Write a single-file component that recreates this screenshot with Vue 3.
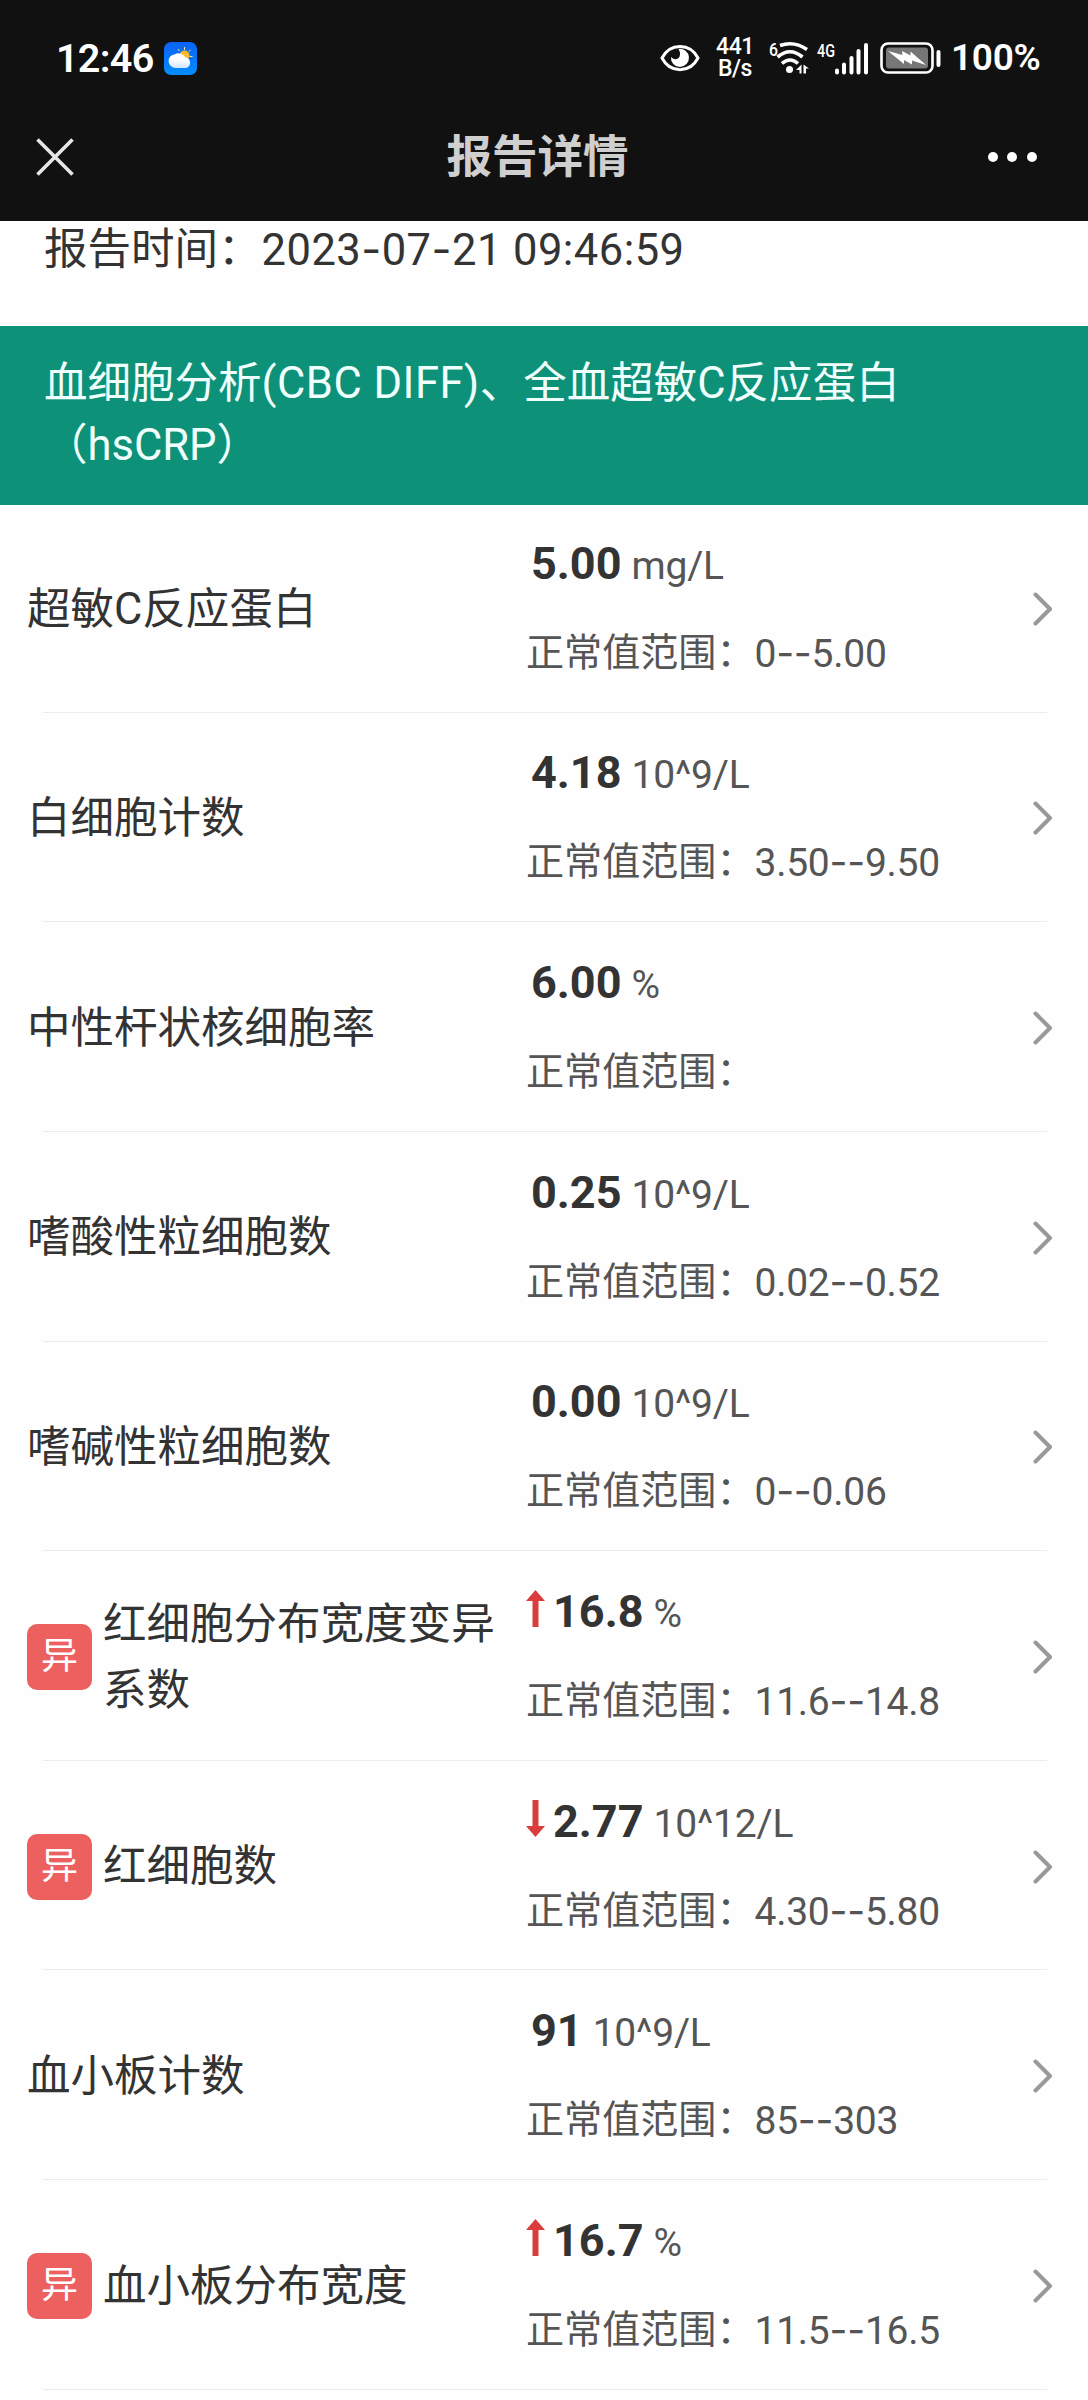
<script setup>
const reportTime = '2023-07-21 09:46:59'

const items = [
  { name: '超敏C反应蛋白', value: '5.00', unit: 'mg/L', range: '0--5.00' },
  { name: '白细胞计数', value: '4.18', unit: '10^9/L', range: '3.50--9.50' },
  { name: '中性杆状核细胞率', value: '6.00', unit: '%', range: '' },
  { name: '嗜酸性粒细胞数', value: '0.25', unit: '10^9/L', range: '0.02--0.52' },
  { name: '嗜碱性粒细胞数', value: '0.00', unit: '10^9/L', range: '0--0.06' },
  { name: '红细胞分布宽度变异系数', value: '16.8', unit: '%', range: '11.6--14.8', flag: 'up' },
  { name: '红细胞数', value: '2.77', unit: '10^12/L', range: '4.30--5.80', flag: 'down' },
  { name: '血小板计数', value: '91', unit: '10^9/L', range: '85--303' },
  { name: '血小板分布宽度', value: '16.7', unit: '%', range: '11.5--16.5', flag: 'up' },
]

// keep the dashes as separate pieces, they use a wider glyph
const pieces = (text) => text.split(/(-+)/).filter(Boolean)
const isDash = (text) => text[0] === '-'
</script>

<template>
  <div class="page">
    <header class="top">
      <div class="status">
        <span class="clock">12:46</span>
        <svg class="weather" viewBox="0 0 33 33">
          <defs>
            <linearGradient id="sky" x1="0" y1="0" x2="0" y2="1">
              <stop offset="0" stop-color="#0a62f4" />
              <stop offset="1" stop-color="#058dff" />
            </linearGradient>
            <linearGradient id="cloud" x1="0" y1="0" x2="0" y2="1">
              <stop offset=".4" stop-color="#fff" />
              <stop offset="1" stop-color="#cfe6ff" />
            </linearGradient>
          </defs>
          <rect width="33" height="33" rx="7" fill="url(#sky)" />
          <path d="M20.500 5v3M14 7l1.600 2M26.500 8l-2 1.700M25.500 14.500h3" stroke="#ffe08a" stroke-width="1" />
          <circle cx="20.500" cy="13.500" r="5" fill="#fdbb25" />
          <path d="M12 26a6.500 6.500 0 0 1-1-13.800 8 8 0 0 1 10.500 3.300A5.300 5.300 0 0 1 21.500 26z" fill="url(#cloud)" />
        </svg>
        <div class="status-right">
          <svg class="eye" viewBox="0 0 40 28">
            <path d="M2 14C10-1.500 30-1.500 38 14 30 29.500 10 29.500 2 14z" fill="none" stroke="#fff" stroke-width="3" />
            <path d="M18.500 5A9 9 0 1 1 11 13q3.500 3.500 7 1.500 4-3.500.5-9.500z" fill="#fff" />
          </svg>
          <div class="speed"><span>441</span><span>B/s</span></div>
          <svg class="wifi" viewBox="0 0 42 36">
            <text x="0" y="16" font-size="19" font-weight="500" textLength="9" lengthAdjust="spacingAndGlyphs">6</text>
            <g fill="none" stroke="#fff" stroke-width="3.600">
              <path d="M11 5.500Q25 .5 38 9.500" />
              <path d="M8.500 17Q21 6.500 33.500 17" />
              <path d="M13 23.500q8-7 16 0" />
            </g>
            <circle cx="20.500" cy="29.500" r="3.500" fill="#fff" />
            <path d="M27 30l5.500-5.500v9h-2v-3.500zM34.500 24.500l5.500 4h-3v5h-2.500z" fill="#fff" />
          </svg>
          <svg class="signal" viewBox="0 0 54 36">
            <text x="0" y="17" font-size="19" font-weight="500" textLength="18" lengthAdjust="spacingAndGlyphs">4G</text>
            <path d="M20 30.500v2M27 24.500v8M34.500 18v14.500M41.500 11v21.500M49 5v27.500" stroke="#fff" stroke-width="4" stroke-linecap="round" />
          </svg>
          <svg class="battery" viewBox="0 0 62 32">
            <rect x="1.500" y="1.500" width="51" height="29" rx="6.500" fill="none" stroke="#fff" stroke-width="2.600" />
            <rect x="6" y="5.500" width="42" height="21" rx="3" fill="#777" />
            <path d="M8 9l14.500 4-.5-4 8.500 4.500V9.500L46 23l-14-4.500v4l-8-4.500v4z" fill="#fff" />
            <path d="M58.500 10v13" stroke="#fff" stroke-width="4" stroke-linecap="round" />
          </svg>
          <span class="percent">100%</span>
        </div>
      </div>
      <nav class="navbar">
        <svg class="close" viewBox="0 0 38 38">
          <path d="M1.500 1.500l35 35M36.500 1.500l-35 35" stroke="#e6e6e6" stroke-width="3.600" />
        </svg>
        <h1>报告详情</h1>
        <div class="more"><i></i><i></i><i></i></div>
      </nav>
    </header>

    <div class="report-time">
      <span>报告时间：</span>
      <span class="date"><span v-for="(p, i) in pieces(reportTime)" :key="i" :class="{ dash: isDash(p) }">{{ p }}</span></span>
    </div>

    <div class="banner">血细胞分析<span class="latin">(CBC DIFF)</span>、全血超敏C反应蛋白<br />（hsCRP）</div>

    <ul class="list">
      <li v-for="item in items" :key="item.name" class="item">
        <span v-if="item.flag" class="badge">异</span>
        <div class="name">{{ item.name }}</div>
        <div class="result">
          <div class="line">
            <svg v-if="item.flag" class="arrow" :class="item.flag" viewBox="0 0 19 37">
              <path d="M9.500 0L19 11h-6.500v26h-6V11H0z" fill="#d93d3d" />
            </svg>
            <span class="value">{{ item.value }}</span>
            <span class="unit">{{ item.unit }}</span>
          </div>
          <div class="range">
            <span>正常值范围：</span>
            <span class="limits"><span v-for="(p, i) in pieces(item.range)" :key="i" :class="{ dash: isDash(p) }">{{ p }}</span></span>
          </div>
        </div>
        <svg class="chevron" viewBox="0 0 20 34">
          <path d="M2.500 2.500L17 17 2.500 31.500" fill="none" stroke="#999" stroke-width="4" stroke-linecap="round" stroke-linejoin="round" />
        </svg>
      </li>
    </ul>
  </div>
</template>

<style>
body{margin:0;background:#fefefe}
</style>

<style scoped>
.page{width:1088px;height:2400px;overflow:hidden;background:#fefefe;color:#333;font-family:Roboto,"Noto Sans CJK SC",sans-serif}
.top{height:221px;box-sizing:border-box;padding-top:1px;background:#111;color:#fff}
.status{height:114px;display:flex;align-items:center;padding:0 50px 0 56px}
.clock{font-size:39.500px;font-weight:600;letter-spacing:-.7px;width:108px;line-height:40px;padding-top:2px;box-sizing:border-box;height:42px}
.weather{width:33px;height:33px}
.status-right{display:flex;align-items:center;margin-left:auto}
.eye{width:40px;height:28px}
.speed{width:38px;margin-left:16px;display:flex;flex-direction:column;align-items:center;font-size:23px;line-height:22px;font-weight:500;letter-spacing:-.4px}
.wifi{width:42px;height:36px;margin-left:15px;overflow:visible}
.signal{width:54px;height:36px;margin-left:6px;overflow:visible}
.wifi text,.signal text{fill:#fff}
.battery{width:62px;height:32px;margin-left:9px}
.percent{font-size:37px;font-weight:600;letter-spacing:-.3px;width:87px;margin-left:9px;line-height:40px;white-space:nowrap}
.navbar{height:83px;display:flex;align-items:center;justify-content:space-between;padding:0 51px 0 36px}
.close{width:38px;height:38px}
h1{margin:0;padding:3px 0 0 13px;font-size:45.500px;line-height:60px;font-weight:700;color:#cfcfcf}
.more{display:flex;gap:9.500px}
.more i{width:10px;height:10px;border-radius:50%;background:#fff}
.report-time{height:105px;box-sizing:border-box;padding:0 44px;display:flex;font-size:43.520px;line-height:57px}
.date{letter-spacing:.45px}
.dash{font-family:Inter,sans-serif}
.banner{height:179px;box-sizing:border-box;padding:27px 44px 0;background:#0d9179;color:#f0fffc;font-size:43.520px;line-height:62px}
.latin{letter-spacing:.5px}
.list{list-style:none;margin:-2px 0 0;padding:0}
.item{position:relative;height:209.650px;box-sizing:border-box;display:flex;align-items:center;padding:2px 35px 0 27px}
.item::after{content:"";position:absolute;left:43px;right:41px;bottom:0;height:1px;background:#ebebeb}
.badge{width:65px;height:66px;margin-right:11px;border-radius:10px;background:#ec6060;color:#fff;font-size:37px;line-height:66px;text-align:center;font-weight:400}
.name{flex:1;font-size:43.520px;line-height:65.500px;padding-top:1px}
.result{width:507px}
.line{display:flex;align-items:baseline;height:88px;line-height:84px;padding-left:5px}
.value{font-size:45px;font-weight:700}
.unit{font-size:39px;color:#555;margin-left:10px;letter-spacing:-.2px}
.arrow{width:19px;height:37px;margin:0 8px 0 -5px}
.arrow.down{transform:rotate(180deg)}
.range{display:flex;font-size:38.080px;line-height:86px;height:86px;color:#555}
.limits{font-size:39px;letter-spacing:-.25px}
.chevron{width:20px;height:34px}
</style>
